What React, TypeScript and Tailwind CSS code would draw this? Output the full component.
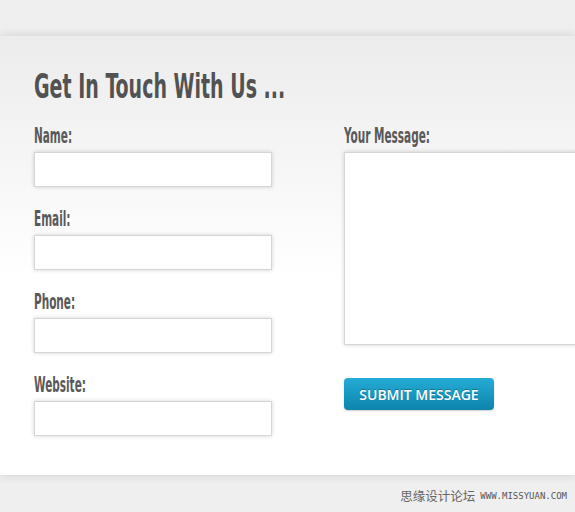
import React from 'react';

const condensed = "font-['Liberation_Sans_Narrow','DejaVu_Sans_Condensed',sans-serif]";

const labelCls = `block h-[24px] mb-[4px] text-[22px] leading-[24px] font-bold whitespace-nowrap text-[#595959] ${condensed}`;

const inputCls =
  'block w-[238px] h-[35px] bg-white border border-[#d6d6d6] shadow-[0_0_4px_rgba(0,0,0,0.18)] outline-none';

function Label({ text }: { text: string }) {
  return (
    <label className={labelCls}>
      <span className="inline-block origin-left scale-x-[0.53]">{text}</span>
    </label>
  );
}

function Field({ label }: { label: string }) {
  return (
    <div>
      <Label text={label} />
      <input type="text" className={inputCls} />
    </div>
  );
}

export default function App() {
  return (
    <div className="w-[575px] h-[512px] overflow-hidden bg-[#efefef] pt-[36px]">
      <div className="h-[439px] overflow-hidden bg-[linear-gradient(to_bottom,#ececec,#ffffff_55%)] shadow-[0_0_10px_rgba(0,0,0,0.14)] pl-[34px] pt-[32px]">
        <h1 className={`h-[38px] text-[33px] leading-[38px] font-bold whitespace-nowrap text-[#525252] ${condensed}`}>
          <span className="inline-block origin-left scale-x-[0.64]">Get In Touch With Us ...</span>
        </h1>

        <div className="mt-[18px] flex gap-[72px]">
          <div className="flex flex-col gap-[20px]">
            <Field label="Name:" />
            <Field label="Email:" />
            <Field label="Phone:" />
            <Field label="Website:" />
          </div>

          <div className="flex flex-col">
            <Label text="Your Message:" />
            <textarea className="block w-[280px] h-[193px] resize-none bg-white border border-[#d6d6d6] shadow-[0_0_4px_rgba(0,0,0,0.18)] outline-none" />
            <button className="mt-[33px] w-[150px] h-[32px] rounded-[4px] bg-[linear-gradient(to_bottom,#25acd5,#0c84ac)] shadow-[0_1px_2px_rgba(0,0,0,0.2)] text-white text-[14px] font-semibold [text-shadow:0_-1px_0_rgba(0,0,0,0.25)] font-['Open_Sans',sans-serif]">
              SUBMIT MESSAGE
            </button>
          </div>
        </div>
      </div>

      <div className="flex items-center justify-end gap-[5px] pr-[8px] pt-[13px]">
        <span className="text-[12.5px] leading-[16px] text-[#666] font-['Noto_Sans_CJK_SC',sans-serif]">
          思缘设计论坛
        </span>
        <span className="text-[9px] leading-[12px] text-[#555] font-['DejaVu_Sans_Mono',monospace]">
          WWW.MISSYUAN.COM
        </span>
      </div>
    </div>
  );
}
